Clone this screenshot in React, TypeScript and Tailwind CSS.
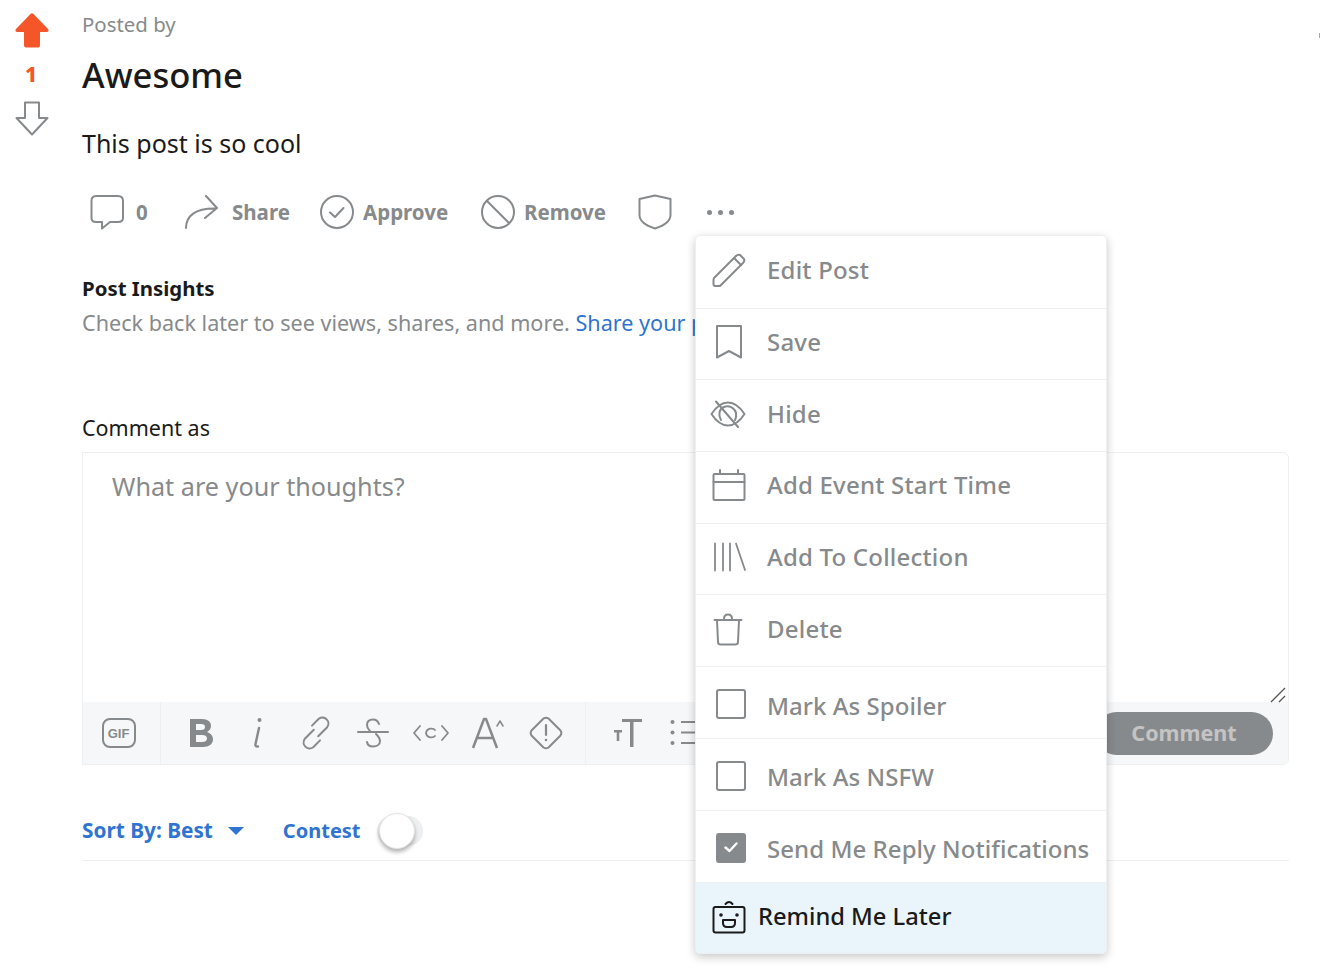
import type { ReactNode } from 'react'

const gray = '#878a8c'

const Icon = ({ w, h, box, children, sw = 2 }: { w: number; h: number; box?: string; children: ReactNode; sw?: number }) => (
  <svg
    width={w}
    height={h}
    viewBox={box ?? `0 0 ${w} ${h}`}
    fill="none"
    stroke={gray}
    strokeWidth={sw}
    strokeLinecap="round"
    strokeLinejoin="round"
    className="block shrink-0"
  >
    {children}
  </svg>
)

const menuItems: { label: string; icon: ReactNode; pad: string }[] = [
  {
    label: 'Edit Post',
    pad: 'pl-[16px]',
    icon: (
      <Icon w={34} h={34}>
        <path d="M2 25 L24 3 Q26 1 28 2 L32 6 Q33 8 31 10 L9 32 Q8.5 33 7 33 L3 33 Q1.500 33 1.500 31 L1.500 27 Q1.500 26 2 25 Z" />
        <path d="M22 5 L29 12" />
      </Icon>
    ),
  },
  {
    label: 'Save',
    pad: 'pl-[18px]',
    icon: (
      <Icon w={30} h={36}>
        <path d="M3 2 H27 V33.500 L15 27 L3 33.500 Z" />
      </Icon>
    ),
  },
  {
    label: 'Hide',
    pad: 'pl-[14px]',
    icon: (
      <Icon w={36} h={28}>
        <path d="M1.500 14 C6 7 11 2.500 18 2.500 C25 2.500 30 7 34.500 14 C30 21 25 25.500 18 25.500 C11 25.500 6 21 1.500 14 Z" />
        <path d="M11 20 C8 15 9 9 14 7 C19 5 25 8 26 13 C26.500 16 26 18 25 20" />
        <path d="M6 1.500 L28 27" />
      </Icon>
    ),
  },
  {
    label: 'Add Event Start Time',
    pad: 'pl-[16px]',
    icon: (
      <Icon w={34} h={32}>
        <rect x="1.500" y="5" width="31" height="26" rx="1" />
        <path d="M1.500 13 H32.500 M8 1 V5 M26 1 V5" />
      </Icon>
    ),
  },
  {
    label: 'Add To Collection',
    pad: 'pl-[17px]',
    icon: (
      <Icon w={34} h={30} sw={1.800}>
        <path d="M2 1.500 V28.500 M10 1.500 V28.500 M17 1.500 V28.500 M23 1.500 L32 28" />
      </Icon>
    ),
  },
  {
    label: 'Delete',
    pad: 'pl-[17px]',
    icon: (
      <Icon w={30} h={34}>
        <path d="M1.500 8 H28.500" />
        <path d="M4 8 L5 30 Q5 32.500 8 32.500 H22 Q25 32.500 25 30 L26 8" />
        <path d="M11 7 Q11 2.500 15 2.500 Q19 2.500 19 7" />
      </Icon>
    ),
  },
]

const checkItems = [
  { label: 'Mark As Spoiler', checked: false },
  { label: 'Mark As NSFW', checked: false },
  { label: 'Send Me Reply Notifications', checked: true },
]

const ActionMenu = () => (
  <div className="absolute left-[695px] top-[235px] w-[412px] overflow-hidden rounded-[5px] border border-[#edeff1] bg-white shadow-[0_3px_10px_rgba(0,0,0,0.22)]">
    {menuItems.map((item, i) => (
      <div
        key={item.label}
        className={`flex items-center border-b border-[#edeff1] pb-[4px] ${i === 0 ? 'h-[72.700px]' : 'h-[71.700px]'}`}
      >
        <div className={`w-[71px] ${item.pad}`}>{item.icon}</div>
        <span className="whitespace-nowrap text-[24px] font-medium leading-none tracking-[0.2px] text-[#878a8c]">{item.label}</span>
      </div>
    ))}
    {checkItems.map((item) => (
      <div key={item.label} className="flex h-[71.800px] items-center border-b border-[#edeff1]">
        <div className="w-[71px] pl-[20px] pt-[3px]">
          {item.checked ? (
            <div className="flex h-[30px] w-[30px] items-center justify-center rounded-[3px] bg-[#878a8c]">
              <svg width="14" height="11" viewBox="0 0 14 11" fill="none" stroke="#fff" strokeWidth="2.400" strokeLinecap="round" strokeLinejoin="round">
                <path d="M1.500 5.500 L5.500 9 L12.500 1.500" />
              </svg>
            </div>
          ) : (
            <div className="h-[30px] w-[30px] rounded-[3px] border-2 border-[#878a8c]" />
          )}
        </div>
        <span className="whitespace-nowrap pt-[6px] text-[24px] font-medium leading-none tracking-[0.05px] text-[#878a8c]">{item.label}</span>
      </div>
    ))}
    <div className="flex h-[70px] items-center bg-[#e9f5fb] pb-[2px]">
      <div className="w-[62px] pl-[16px]">
        <svg width="34" height="34" viewBox="0 0 34 34" fill="none" stroke="#1a1a1b" strokeWidth="2" strokeLinecap="round" strokeLinejoin="round">
          <rect x="1.500" y="7" width="31" height="25.500" rx="2" />
          <path d="M13.500 4 Q17 0 20.500 4" />
          <path d="M11 20 H23 V23 Q23 27 19 27 H15 Q11 27 11 23 Z" />
          <circle cx="9" cy="15" r="0.800" fill="#1a1a1b" />
          <circle cx="25" cy="15" r="0.800" fill="#1a1a1b" />
        </svg>
      </div>
      <span className="text-[23.700px] font-medium leading-none text-[#1a1a1b]">Remind Me Later</span>
    </div>
  </div>
)

const Action = ({ icon, label, cls }: { icon: ReactNode; label?: string; cls: string }) => (
  <div className={`flex items-center ${cls}`}>
    {icon}
    {label && <span className="text-[20.500px] font-bold leading-none text-[#878a8c]">{label}</span>}
  </div>
)

const Toolbar = () => (
  <div className="flex h-[62px] items-center bg-[#f6f7f8]">
    <div className="flex h-full w-[78px] items-center justify-center border-r border-[#edeff1] pr-[6px]">
      <div className="flex h-[30px] w-[34px] items-center justify-center rounded-[8px] border-2 border-[#878a8c] font-['Liberation_Sans',sans-serif] text-[13px] font-bold leading-none text-[#878a8c]">
        GIF
      </div>
    </div>
    <div className="flex h-full items-center border-r border-[#edeff1] pl-[11px] pr-[10px]">
      {[
        <Icon key="b" w={24} h={30} sw={0}>
          <path fill={gray} fillRule="evenodd" d="M1 1 H13 C19 1 22 4 22 8 C22 11 20 13 18 14 C21 15 24 17 24 21.500 C24 26 20 29 14 29 H1 Z M7 6 V12 H12 C15 12 16 11 16 9 C16 7 15 6 12 6 Z M7 17 V24 H13 C16 24 18 23 18 20.500 C18 18 16 17 13 17 Z" />
        </Icon>,
        <Icon key="i" w={12} h={32} sw={2.400}>
          <circle cx="7.500" cy="3" r="2" fill={gray} stroke="none" />
          <path d="M7 11 L3.500 27 Q3 30 6 29.500" />
        </Icon>,
        <Icon key="link" w={28} h={36} box="-1 0 28 36">
          <path d="M15.200 21.200 L24.200 12.200 A6 6 0 0 0 15.800 3.800 L9 10.600" />
          <path d="M10.800 14.800 L1.800 23.800 A6 6 0 0 0 10.200 32.200 L17 25.400" />
        </Icon>,
        <Icon key="s" w={32} h={30}>
          <path d="M1 14 H31" />
          <path d="M22 6 C21 3 19 1.500 16 1.500 C12 1.500 10 4 10 7 C10 9 11 11 13 13" />
          <path d="M19 16 C21 18 23 20 23 23 C23 26.500 20 28.500 16 28.500 C12.500 28.500 10.500 27 10 24" />
        </Icon>,
        <Icon key="c" w={36} h={20} sw={1.800}>
          <path d="M7 3 L1 10 L7 17 M29 3 L35 10 L29 17" />
          <path d="M22 7 C20.500 5 14 4.500 13 10 C14 15.500 20.500 15 22 13" />
        </Icon>,
        <Icon key="a" w={32} h={32}>
          <path d="M1 31 L12 2 H14 L25 31 M5 21 H21" strokeWidth={2.500} strokeLinecap="butt" />
          <path d="M25 9 L28 4 L31 9" strokeWidth={1.500} />
        </Icon>,
        <Icon key="warn" w={34} h={34}>
          <path d="M14.500 2.500 Q17 0.800 19.500 2.500 L31.500 14.500 Q33.200 17 31.500 19.500 L19.500 31.500 Q17 33.200 14.500 31.500 L2.500 19.500 Q0.800 17 2.500 14.500 Z" />
          <path d="M17 9 V19" strokeWidth={2.200} />
          <circle cx="17" cy="24" r="1.300" fill={gray} stroke="none" />
        </Icon>,
      ].map((icon, i) => (
        <div key={i} className="flex w-[57.500px] justify-center">
          {icon}
        </div>
      ))}
    </div>
    <div className="flex h-full items-center gap-[27px] pl-[27px]">
      <Icon w={30} h={30} sw={0}>
        <path fill={gray} d="M9 1 H29 V4 H20.500 V29 H17 V4 H9 Z M1 12 H9 V14.500 H6.300 V23 H3.700 V14.500 H1 Z" />
      </Icon>
      <Icon w={30} h={28}>
        <circle cx="2.500" cy="3" r="2" fill={gray} stroke="none" />
        <circle cx="2.500" cy="13.500" r="2" fill={gray} stroke="none" />
        <circle cx="2.500" cy="24" r="2" fill={gray} stroke="none" />
        <path d="M11 3 H30 M11 13.500 H30 M11 24 H30" strokeLinecap="butt" />
      </Icon>
    </div>
    <button className="ml-auto mr-[15px] h-[43px] w-[178px] rounded-full bg-[#878a8c] text-[21.500px] font-bold leading-none text-[#c4c4c4]">
      Comment
    </button>
  </div>
)

export default function App() {
  return (
    <div className="relative h-[970px] w-[1320px] overflow-hidden bg-white font-['Noto_Sans',sans-serif]">
      <div className="flex">
        <div className="flex w-[82px] shrink-0 flex-col">
          <div className="ml-[15px] mt-[13px]">
            <svg width="34" height="35" viewBox="0 0 34 35" className="block">
              <path fill="#f4562a" d="M15.500 1 Q17 -0.500 18.500 1 L33 16 Q34.500 18.500 32 19 H25 V32.500 Q25 34.500 23 34.500 H11 Q9 34.500 9 32.500 V19 H2 Q-0.500 18.500 1 16 Z" />
            </svg>
          </div>
          <div className="ml-[14px] mt-[14px] w-[34px] text-center text-[21px] font-extrabold leading-[24px] text-[#f4562a]">1</div>
          <div className="ml-[15px] mt-[15px]">
            <svg width="34" height="35" viewBox="0 0 34 35" fill="none" stroke={gray} strokeWidth="2" strokeLinejoin="round" className="block">
              <path d="M10 1.500 H24 V17 H32.500 L17 33.500 L1.500 17 H10 Z" />
            </svg>
          </div>
        </div>

        <div className="mr-[31px] min-w-0 flex-1">
          <div className="pt-[10px] text-[20.400px] leading-[28px] text-[#878a8c]">Posted by</div>
          <h1 className="mt-[15px] text-[34.600px] font-medium leading-[44px] text-[#1a1a1b]">Awesome</h1>
          <p className="mt-[29px] text-[25px] leading-[34px] text-[#1a1a1b]">This post is so cool</p>

          <div className="mt-[30px] flex h-[44px] items-center whitespace-nowrap">
            <Action
              cls="ml-[8px] w-[94px] gap-[12px]"
              icon={
                <Icon w={34} h={36}>
                  <path d="M6 2 H28 Q33 2 33 7 V24 Q33 28 28 28 H20 L12 34.500 V28 H6 Q1.500 28 1.500 24 V7 Q1.500 2 6 2 Z" />
                </Icon>
              }
              label="0"
            />
            <Action
              cls="w-[136px] gap-[14px]"
              icon={
                <Icon w={34} h={36}>
                  <path d="M2 34 C2 22 11 14 32 14.500 M22 2 L33 14 L21 24" />
                </Icon>
              }
              label="Share"
            />
            <Action
              cls="w-[161px] gap-[9px]"
              icon={
                <Icon w={34} h={34}>
                  <circle cx="17" cy="17" r="16" />
                  <path d="M10 17.500 L15 22 L23.500 13" />
                </Icon>
              }
              label="Approve"
            />
            <Action
              cls="w-[157px] gap-[9px]"
              icon={
                <Icon w={34} h={34}>
                  <circle cx="17" cy="17" r="16" />
                  <path d="M6 6 L28 28" />
                </Icon>
              }
              label="Remove"
            />
            <Action
              cls="w-[69px]"
              icon={
                <Icon w={34} h={36}>
                  <path d="M17 1.500 L32.500 5 V21 C32.500 28 25 32 17 34.500 C9 32 1.500 28 1.500 21 V5 Z" />
                </Icon>
              }
            />
            <div className="flex gap-[6px]">
              <span className="h-[5px] w-[5px] rounded-full bg-[#878a8c]" />
              <span className="h-[5px] w-[5px] rounded-full bg-[#878a8c]" />
              <span className="h-[5px] w-[5px] rounded-full bg-[#878a8c]" />
            </div>
          </div>

          <div className="mt-[40px] text-[20.400px] font-bold leading-[28px] text-[#1a1a1b]">Post Insights</div>
          <div className="mt-[7px] whitespace-nowrap text-[21.600px] leading-[28px] text-[#878a8c]">
            Check back later to see views, shares, and more. <span className="text-[#2f74d0]">Share your post</span>
          </div>

          <div className="mt-[77px] text-[21.500px] leading-[28px] text-[#1a1a1b]">Comment as</div>
          <div className="relative mt-[10px] overflow-hidden rounded-r-[6px] border border-[#edeff1]">
            <div className="h-[249px] px-[29px] pt-[16px] text-[25.200px] leading-[34px] text-[#878a8c]">What are your thoughts?</div>
            <svg width="16" height="16" viewBox="0 0 16 16" stroke="#555" strokeWidth="1.300" className="absolute right-[2px] top-[234px]">
              <path d="M1 15 L15 1 M9 15 L15 9" />
            </svg>
            <Toolbar />
          </div>

          <div className="flex h-[96px] items-center border-b border-[#edeff1] pt-[36px] text-[#2f74d0]">
            <span className="text-[20.800px] font-bold leading-none">Sort By: Best</span>
            <span className="ml-[15px] h-0 w-0 border-x-[8px] border-t-[8px] border-x-transparent border-t-[#2f74d0]" />
            <span className="ml-[39px] text-[20px] font-bold leading-none">Contest</span>
            <div className="ml-[16px] flex h-[30px] w-[46px] items-center rounded-full bg-[#edeff1] pl-[2px]">
              <span className="h-[36px] w-[36px] rounded-full border border-[#e3e3e3] bg-white shadow-[0_3px_4px_rgba(0,0,0,0.3)]" />
            </div>
          </div>
        </div>
      </div>

      <ActionMenu />
      <div className="absolute right-0 top-[33px] h-[5px] w-[1px] bg-[#aaa]" />
    </div>
  )
}
